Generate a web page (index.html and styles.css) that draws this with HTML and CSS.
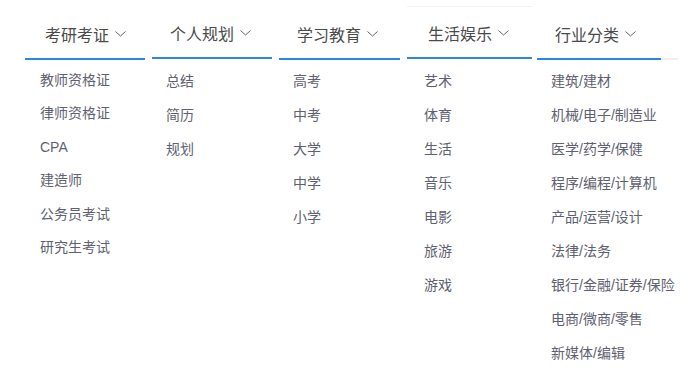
FILE: index.html
```html
<!DOCTYPE html>
<html lang="zh-CN">
<head>
    <meta charset="UTF-8">
    <title>分类导航</title>
    <link rel="stylesheet" href="styles.css">
</head>
<body>
    <div class="menu">
        <div class="column first">
            <div class="column-title">考研考证 <svg class="arrow" width="11" height="6" viewBox="0 0 11 6"><polyline points="0.5,0.5 5.5,5 10.5,0.5"/></svg></div>
            <ul class="items">
                <li>教师资格证</li>
                <li>律师资格证</li>
                <li>CPA</li>
                <li>建造师</li>
                <li>公务员考试</li>
                <li>研究生考试</li>
            </ul>
        </div>
        <div class="column raised">
            <div class="column-title">个人规划 <svg class="arrow" width="11" height="6" viewBox="0 0 11 6"><polyline points="0.5,0.5 5.5,5 10.5,0.5"/></svg></div>
            <ul class="items">
                <li>总结</li>
                <li>简历</li>
                <li>规划</li>
            </ul>
        </div>
        <div class="column middle">
            <div class="column-title">学习教育 <svg class="arrow" width="11" height="6" viewBox="0 0 11 6"><polyline points="0.5,0.5 5.5,5 10.5,0.5"/></svg></div>
            <ul class="items">
                <li>高考</li>
                <li>中考</li>
                <li>大学</li>
                <li>中学</li>
                <li>小学</li>
            </ul>
        </div>
        <div class="column raised outlined">
            <div class="column-title">生活娱乐 <svg class="arrow" width="11" height="6" viewBox="0 0 11 6"><polyline points="0.5,0.5 5.5,5 10.5,0.5"/></svg></div>
            <ul class="items">
                <li>艺术</li>
                <li>体育</li>
                <li>生活</li>
                <li>音乐</li>
                <li>电影</li>
                <li>旅游</li>
                <li>游戏</li>
            </ul>
        </div>
        <div class="column last">
            <div class="column-title">行业分类 <svg class="arrow" width="11" height="6" viewBox="0 0 11 6"><polyline points="0.5,0.5 5.5,5 10.5,0.5"/></svg></div>
            <ul class="items">
                <li>建筑/建材</li>
                <li>机械/电子/制造业</li>
                <li>医学/药学/保健</li>
                <li>程序/编程/计算机</li>
                <li>产品/运营/设计</li>
                <li>法律/法务</li>
                <li>银行/金融/证券/保险</li>
                <li>电商/微商/零售</li>
                <li>新媒体/编辑</li>
            </ul>
        </div>
    </div>
</body>
</html>
```

FILE: styles.css
```css
body {
    margin: 0;
    background-color: #fff;
    font-family: "Noto Sans CJK SC", "Noto Sans", sans-serif;
}

.menu {
    display: grid;
    grid-template-columns: 120px 120px 121px 125px 122px;
    column-gap: 7px;
    padding-left: 25px;
    align-items: start;
}

.column-title {
    height: 60px;
    box-sizing: border-box;
    padding: 22px 0 0 20px;
    border-bottom: 2px solid #2d86e6;
    font-size: 16px;
    line-height: 24px;
    color: #4a4a4a;
    white-space: nowrap;
}

.arrow {
    margin-left: 2px;
    vertical-align: 4px;
}

.arrow polyline {
    fill: none;
    stroke: #666;
    stroke-width: 1;
}

.raised .column-title {
    height: 59px;
    padding: 21px 0 0 18px;
}

.middle .column-title {
    padding-left: 18px;
}

.outlined .column-title {
    border-top: 1px solid #f2f2f2;
    margin-top: 6px;
    height: 53px;
    padding: 14px 0 0 21px;
}

.last {
    margin-left: -2px;
}

.last .column-title {
    position: relative;
    padding-left: 18px;
}

.last .column-title::after {
    content: "";
    position: absolute;
    right: -17px;
    bottom: -2px;
    width: 17px;
    height: 2px;
    background-color: #f0f0f0;
}

.items {
    list-style: none;
    margin: 0;
    padding: 4px 0 0 15px;
}

.raised .items {
    padding-left: 14px;
    padding-top: 5px;
}

.middle .items {
    padding-left: 14px;
}

.outlined .items {
    padding-left: 17px;
}

.last .items {
    padding-left: 14px;
}

.items li {
    height: 34px;
    line-height: 34px;
    font-family: "Liberation Sans", "Noto Sans CJK SC", sans-serif;
    font-size: 14px;
    color: #5e6170;
    white-space: nowrap;
}

.first .items li {
    height: 33.4px;
    line-height: 33.4px;
}
```
